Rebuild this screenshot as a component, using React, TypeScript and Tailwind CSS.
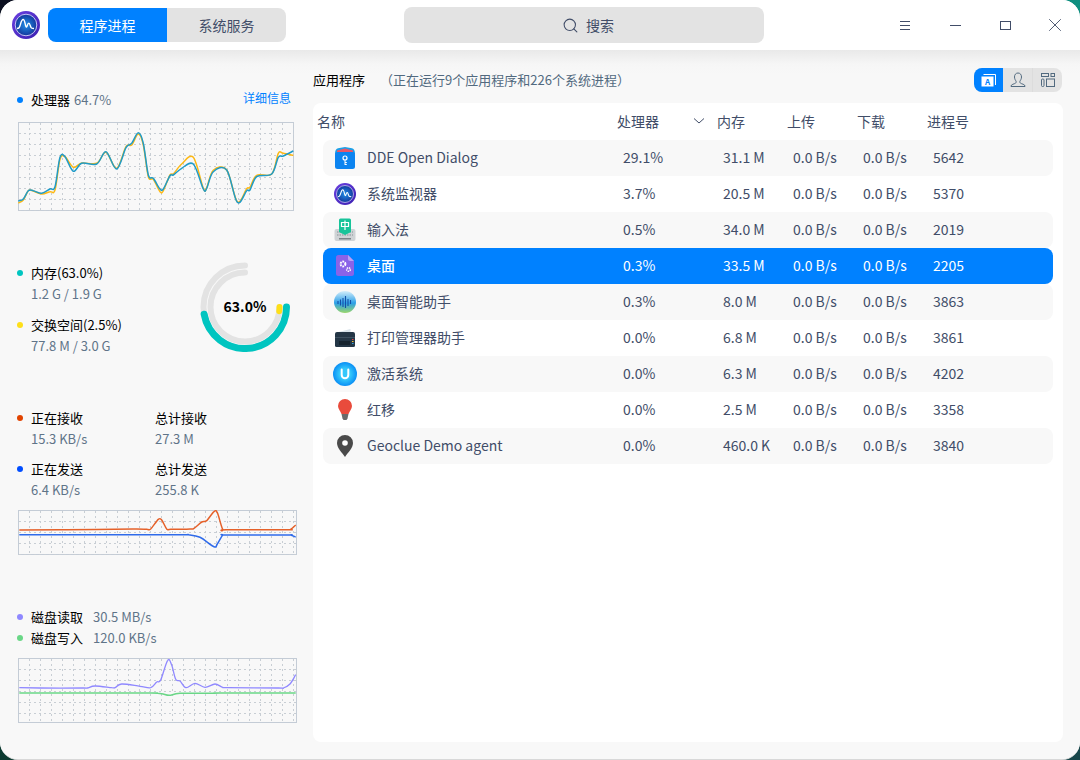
import { ReactNode } from "react";
import { Search, X } from "lucide-react";

type Pt = [number, number];

// points are read off the 3x crops, so they get scaled back down here
function smooth(raw: Pt[], ox: number, oy: number) {
  const p = raw.map(([x, y]) => [x / 3 - ox, y / 3 - oy]);
  let d = `M${p[0][0].toFixed(1)} ${p[0][1].toFixed(1)}`;
  for (let i = 0; i < p.length - 1; i++) {
    const a = p[Math.max(i - 1, 0)];
    const b = p[i];
    const c = p[i + 1];
    const e = p[Math.min(i + 2, p.length - 1)];
    const c1x = b[0] + (c[0] - a[0]) / 6;
    const c1y = b[1] + (c[1] - a[1]) / 6;
    const c2x = c[0] - (e[0] - b[0]) / 6;
    const c2y = c[1] - (e[1] - b[1]) / 6;
    d += ` C${c1x.toFixed(1)} ${c1y.toFixed(1)} ${c2x.toFixed(1)} ${c2y.toFixed(1)} ${c[0].toFixed(1)} ${c[1].toFixed(1)}`;
  }
  return d;
}

const CPU_BLUE: Pt[] = [[55,603],[70,597],[85,572],[100,572],[125,580],[150,567],[165,560],[180,472],[195,470],[220,514],[245,490],[290,492],[318,455],[350,507],[378,443],[395,430],[415,398],[430,430],[445,525],[460,535],[480,567],[490,567],[510,527],[520,525],[545,505],[580,492],[610,567],[620,565],[640,515],[680,510],[712,607],[740,572],[750,570],[770,530],[815,522],[835,472],[850,468],[880,453]];
const CPU_YELLOW: Pt[] = [[55,609],[70,600],[85,572],[100,573],[125,582],[150,575],[165,570],[180,478],[195,470],[220,502],[245,489],[290,490],[318,457],[350,505],[378,440],[395,435],[415,402],[430,435],[445,530],[460,538],[480,575],[490,572],[510,525],[520,522],[545,492],[580,472],[610,565],[620,563],[640,511],[680,510],[712,605],[740,566],[750,562],[770,526],[815,522],[835,460],[850,460],[880,466]];
const NET_UP: Pt[] = [[58,390],[200,389],[400,387],[440,388],[452,387],[475,358],[485,360],[500,387],[512,388],[570,387],[582,385],[605,366],[620,362],[642,335],[652,338],[668,388],[680,389],[860,389],[872,388],[887,375]];
const NET_DOWN: Pt[] = [[58,404],[400,404],[550,404],[565,404],[600,412],[642,440],[652,432],[668,406],[680,405],[860,405],[872,405],[887,411]];
const DISK_READ: Pt[] = [[58,263],[120,264],[250,264],[262,264],[285,258],[335,263],[345,263],[365,252],[420,259],[452,263],[470,246],[482,240],[503,181],[515,195],[527,238],[540,243],[558,263],[585,250],[615,262],[645,252],[668,262],[685,263],[835,264],[850,264],[870,252],[887,224]];
const DISK_WRITE: Pt[] = [[58,279],[440,279],[455,279],[485,281],[508,286],[540,280],[640,280],[660,279],[887,279]];

function Grid({ w, h, children }: { w: number; h: number; children: ReactNode }) {
  const vs: number[] = [];
  for (let x = 11; x < w; x += 11) vs.push(x);
  const hs: number[] = [];
  for (let y = 11; y < h; y += 11) hs.push(y);
  return (
    <svg width={w} height={h} className="block">
      <rect x="0.5" y="0.5" width={w - 1} height={h - 1} fill="#f8f8f8" stroke="#c4ccd6" />
      {vs.map((x) => (
        <line key={x} x1={x + 0.5} x2={x + 0.5} y1="1" y2={h - 1} stroke="#c8ced4" strokeDasharray="2 3" />
      ))}
      {hs.map((y) => (
        <line key={y} y1={y + 0.5} y2={y + 0.5} x1="1" x2={w - 1} stroke="#c8ced4" strokeDasharray="2 3" />
      ))}
      {children}
    </svg>
  );
}

function Dot({ color }: { color: string }) {
  return <span className={`w-[6px] h-[6px] rounded-full shrink-0 ${color}`} />;
}

function Arc({ r, deg, color, w }: { r: number; deg: number; color: string; w: number }) {
  const rad = (deg * Math.PI) / 180;
  const x = 50 + r * Math.cos(rad);
  const y = 50 + r * Math.sin(rad);
  return (
    <path
      d={`M${50 + r} 50 A${r} ${r} 0 ${deg > 180 ? 1 : 0} 1 ${x.toFixed(2)} ${y.toFixed(2)}`}
      fill="none"
      stroke={color}
      strokeWidth={w}
      strokeLinecap="round"
    />
  );
}

function MonitorIcon({ size }: { size: number }) {
  return (
    <svg width={size} height={size} viewBox="0 0 28 28">
      <defs>
        <linearGradient id="monRing" x1="0" y1="0" x2="1" y2="1">
          <stop offset="0" stopColor="#6a3fe0" />
          <stop offset="1" stopColor="#3a1fb0" />
        </linearGradient>
        <radialGradient id="monFace">
          <stop offset="0" stopColor="#1f8fe8" />
          <stop offset="1" stopColor="#14389c" />
        </radialGradient>
      </defs>
      <circle cx="14" cy="14" r="14" fill="url(#monRing)" />
      <circle cx="14" cy="14" r="10.8" fill="url(#monFace)" stroke="#c9c6f5" strokeWidth="1" />
      <path d="M5 17.5c2 0 2.4-.6 3.4-4 .8-3 1.6-5 2.8-5s1.700 3 2.400 6c.5 1.800 1 2 1.500.6.500-1.500.8-3 1.700-3s1.500 3 2.200 4.400c.4.800 1.500 1 3 1" fill="none" stroke="#fff" strokeWidth="1.400" />
    </svg>
  );
}

function DialogIcon() {
  return (
    <svg width="22" height="22" viewBox="0 0 22 22">
      <path d="M1 7c0-4 1.500-5.500 3-5.800L11 0l7 1.200c1.500.3 3 1.800 3 5.800z" fill="#1aa0e8" />
      <path d="M3 3.500 11 1.500l8 2v3H3z" fill="#e8566a" />
      <rect x="1" y="5" width="20" height="17" rx="2.500" fill="#0c84f0" />
      <circle cx="11" cy="11" r="2" fill="none" stroke="#fff" strokeWidth="1.200" />
      <path d="M11 13v5M11 15.500h1.800M11 17.500h1.800" stroke="#fff" strokeWidth="1" fill="none" />
    </svg>
  );
}

function ImeIcon() {
  return (
    <svg width="22" height="24" viewBox="0 0 22 24">
      <rect x="0.500" y="11" width="21" height="12" rx="2" fill="#cfd3d6" />
      <path d="M3 14h16M3 17h16" stroke="#8a9196" strokeWidth="1.200" strokeDasharray="1.500 1" />
      <rect x="5" y="20" width="12" height="1.500" fill="#7c8388" />
      <path d="M5 2a1.500 1.500 0 0 1 1.500-1.500h9A1.500 1.500 0 0 1 17 2v12l-6 3-6-3z" fill="#18c49a" />
      <path d="M7.500 4.500h7v4h-7zM11 2.500v9.500" fill="none" stroke="#fff" strokeWidth="1.200" />
    </svg>
  );
}

function DesktopIcon() {
  return (
    <svg width="18" height="21" viewBox="0 0 18 21">
      <path d="M2.500 0H12l6 6v12.500a2.500 2.500 0 0 1-2.500 2.500h-13A2.500 2.500 0 0 1 0 18.500v-16A2.500 2.500 0 0 1 2.500 0z" fill="#8a63e8" />
      <path d="M12 0l6 6h-4a2 2 0 0 1-2-2z" fill="#b9a0f5" />
      <circle cx="7" cy="9" r="2.400" fill="none" stroke="#fff" strokeWidth="2" strokeDasharray="1.600 .8" />
      <circle cx="12.500" cy="14.500" r="1.800" fill="none" stroke="#fff" strokeWidth="1.600" strokeDasharray="1.300 .7" />
    </svg>
  );
}

function AssistantIcon() {
  return (
    <svg width="22" height="22" viewBox="0 0 22 22">
      <defs>
        <linearGradient id="asst" x1="0" y1="0" x2="0" y2="1">
          <stop offset="0" stopColor="#d4eefb" />
          <stop offset="0.550" stopColor="#2b9fe8" />
          <stop offset="1" stopColor="#9ad66a" />
        </linearGradient>
      </defs>
      <circle cx="11" cy="11" r="11" fill="url(#asst)" />
      <path d="M4 10v3M6.500 8.500v6M9 7v9M11.500 5v12M14 8v7M16.500 9v4" stroke="#1450a8" strokeWidth="1.100" />
    </svg>
  );
}

function PrinterIcon() {
  return (
    <svg width="20" height="18" viewBox="0 0 20 18">
      <path d="M3.500 3 15.500 0v4h-12z" fill="#d8e2ea" />
      <path d="M2 3h16a2 2 0 0 1 2 2v11.500a1.500 1.500 0 0 1-1.500 1.500h-17A1.500 1.500 0 0 1 0 16.500V5a2 2 0 0 1 2-2z" fill="#243646" />
      <rect x="0" y="8" width="20" height="1" fill="#3d5060" />
      <rect x="4" y="12" width="11" height="4" fill="#16242f" />
      <rect x="17" y="10" width="1.500" height="1" fill="#e04040" />
      <rect x="17" y="12" width="1.500" height="1" fill="#f0c030" />
      <rect x="17" y="14" width="1.500" height="1" fill="#30a0e0" />
    </svg>
  );
}

function ActivateIcon() {
  return (
    <svg width="24" height="24" viewBox="0 0 24 24">
      <defs>
        <radialGradient id="actv">
          <stop offset="0.450" stopColor="#35c8fb" />
          <stop offset="1" stopColor="#0a8ff5" />
        </radialGradient>
      </defs>
      <circle cx="12" cy="12" r="12" fill="url(#actv)" />
      <path d="M8.700 7.500V13a3.300 3.300 0 0 0 6.600 0V7.500" fill="none" stroke="#fff" strokeWidth="2" strokeLinecap="round" />
    </svg>
  );
}

function RedshiftIcon() {
  return (
    <svg width="14" height="21" viewBox="0 0 14 21">
      <path d="M7 0a7 7 0 0 1 7 7c0 3-2.500 5-3.500 8h-7C2.500 12 0 10 0 7a7 7 0 0 1 7-7z" fill="#e94b3c" />
      <path d="M3.500 15h7l-1 4.500-1 1.500h-3l-1-1.500z" fill="#6a6a6a" />
    </svg>
  );
}

function PinIcon() {
  return (
    <svg width="16" height="22" viewBox="0 0 16 22">
      <path d="M8 0a8 8 0 0 1 8 8c0 5-5 9.500-8 14-3-4.500-8-9-8-14a8 8 0 0 1 8-8z" fill="#4a4a4a" />
      <circle cx="8" cy="8" r="2.800" fill="#fff" />
    </svg>
  );
}

const ROWS = [
  { icon: <DialogIcon />, name: "DDE Open Dialog", cpu: "29.1%", mem: "31.1 M", pid: "5642" },
  { icon: <MonitorIcon size={22} />, name: "系统监视器", cpu: "3.7%", mem: "20.5 M", pid: "5370" },
  { icon: <ImeIcon />, name: "输入法", cpu: "0.5%", mem: "34.0 M", pid: "2019" },
  { icon: <DesktopIcon />, name: "桌面", cpu: "0.3%", mem: "33.5 M", pid: "2205", selected: true },
  { icon: <AssistantIcon />, name: "桌面智能助手", cpu: "0.3%", mem: "8.0 M", pid: "3863" },
  { icon: <PrinterIcon />, name: "打印管理器助手", cpu: "0.0%", mem: "6.8 M", pid: "3861" },
  { icon: <ActivateIcon />, name: "激活系统", cpu: "0.0%", mem: "6.3 M", pid: "4202" },
  { icon: <RedshiftIcon />, name: "红移", cpu: "0.0%", mem: "2.5 M", pid: "3358" },
  { icon: <PinIcon />, name: "Geoclue Demo agent", cpu: "0.0%", mem: "460.0 K", pid: "3840" },
];

export default function App() {
  return (
    <div className="w-[1080px] h-[760px] overflow-hidden bg-[conic-gradient(#0f8f80_0_25%,#17464a_25%_50%,#0b3a30_50%_75%,#0b1020_75%)] font-['Noto_Sans_CJK_SC','Noto_Sans',sans-serif] text-[14px]">
      <div className="w-full h-full rounded-[18px] overflow-hidden bg-[#f8f8f8] flex flex-col border-b border-[#d8d8d8]">
        {/* title bar */}
        <header className="h-[50px] shrink-0 bg-white flex items-center pl-[12px] relative">
          <MonitorIcon size={28} />
          <div className="ml-[8px] flex h-[34px] w-[238px] rounded-[8px] overflow-hidden text-[14px]">
            <div className="w-[119px] bg-[#0081ff] text-white flex items-center justify-center">程序进程</div>
            <div className="w-[119px] bg-[#e3e3e3] text-[#414d68] flex items-center justify-center">系统服务</div>
          </div>
          <div className="ml-[118px] w-[360px] h-[36px] rounded-[8px] bg-[#e3e3e3] flex items-center justify-center gap-[7px] pl-[8px] text-[#526a7f]">
            <Search size={17} strokeWidth={1.500} className="text-[#414d68]" />
            <span className="text-[#414d68]">搜索</span>
          </div>
          <div className="ml-auto flex items-center text-[#414d68]">
            <button className="w-[50px] h-[50px] flex items-center justify-center">
              <span className="flex flex-col gap-[3px] w-[10px]">
                <span className="h-px bg-[#414d68]" />
                <span className="h-px bg-[#414d68]" />
                <span className="h-px bg-[#414d68]" />
              </span>
            </button>
            <button className="w-[50px] h-[50px] flex items-center justify-center">
              <span className="w-[11px] h-px bg-[#414d68]" />
            </button>
            <button className="w-[50px] h-[50px] flex items-center justify-center">
              <span className="w-[11px] h-[9px] border border-[#414d68]" />
            </button>
            <button className="w-[50px] h-[50px] flex items-center justify-center">
              <X size={22} strokeWidth={1} />
            </button>
          </div>
        </header>

        <div className="flex-1 flex min-h-0 bg-[linear-gradient(#e9e9e9,#f6f6f6_14px,#f8f8f8_24px)]">
          {/* left summary column */}
          <aside className="w-[313px] shrink-0 pl-[18px] flex flex-col">
            <section className="pt-[39px]">
              <div className="flex items-center h-[22px] -ml-[1px]">
                <Dot color="bg-[#0081ff]" />
                <span className="ml-[8px] text-[13px] text-black">处理器</span>
                <span className="ml-[4px] text-[13px] text-[#5f7488]">64.7%</span>
                <span className="ml-auto mr-[22px] text-[12px] text-[#0081ff] -mt-[4px]">详细信息</span>
              </div>
              <div className="mt-[11px]">
                <Grid w={276} h={89}>
                  <path d={smooth(CPU_YELLOW, 18, 122)} fill="none" stroke="#fdb813" strokeWidth="1.500" />
                  <path d={smooth(CPU_BLUE, 18, 122)} fill="none" stroke="#1f9bc8" strokeWidth="1.500" />
                </Grid>
              </div>
            </section>

            <section className="mt-[51px] h-[90px] flex items-center relative">
              <div className="flex flex-col -ml-[1px] pt-[4px]">
                <div className="flex items-center h-[20px] text-[13px] text-black">
                  <Dot color="bg-[#00c5c0]" />
                  <span className="ml-[8px]">内存(63.0%)</span>
                </div>
                <div className="ml-[14px] h-[20px] mt-[1px] text-[13px] leading-[20px] text-[#5f7488]">1.2 G / 1.9 G</div>
                <div className="flex items-center h-[20px] mt-[11px] text-[13px] text-black">
                  <Dot color="bg-[#fedf19]" />
                  <span className="ml-[8px]">交换空间(2.5%)</span>
                </div>
                <div className="ml-[14px] h-[20px] mt-[1px] text-[13px] leading-[20px] text-[#5f7488]">77.8 M / 3.0 G</div>
              </div>
              <div className="ml-auto mr-[23px] w-[90px] h-[90px] relative">
                <svg width="90" height="90" viewBox="5 5 90 90">
                  <Arc r={41.5} deg={270} color="#e3e3e3" w={6} />
                  <Arc r={41.5} deg={170} color="#00c5c0" w={7} />
                  <Arc r={34.500} deg={270} color="#e3e3e3" w={6} />
                  <Arc r={34.500} deg={7} color="#fedf19" w={6} />
                </svg>
                <span className="absolute inset-0 flex items-center justify-center text-[14px] font-semibold text-black -mt-[1px]">63.0%</span>
              </div>
            </section>

            <section className="mt-[56px]">
              <div className="grid grid-cols-[138px_1fr] -ml-[1px] text-[13px] text-black">
                <div>
                  <div className="flex items-center h-[20px]"><Dot color="bg-[#e14300]" /><span className="ml-[8px]">正在接收</span></div>
                  <div className="ml-[14px] mt-[1px] h-[20px] text-[13px] leading-[20px] text-[#5f7488]">15.3 KB/s</div>
                </div>
                <div>
                  <div className="h-[20px] leading-[20px]">总计接收</div>
                  <div className="mt-[1px] h-[20px] text-[13px] leading-[20px] text-[#5f7488]">27.3 M</div>
                </div>
                <div className="mt-[10px]">
                  <div className="flex items-center h-[20px]"><Dot color="bg-[#004dff]" /><span className="ml-[8px]">正在发送</span></div>
                  <div className="ml-[14px] mt-[1px] h-[20px] text-[13px] leading-[20px] text-[#5f7488]">6.4 KB/s</div>
                </div>
                <div className="mt-[10px]">
                  <div className="h-[20px] leading-[20px]">总计发送</div>
                  <div className="mt-[1px] h-[20px] text-[13px] leading-[20px] text-[#5f7488]">255.8 K</div>
                </div>
              </div>
              <div className="mt-[10px]">
                <Grid w={279} h={45}>
                  <path d={smooth(NET_UP, 18, 110)} fill="none" stroke="#e5612a" strokeWidth="1.500" />
                  <path d={smooth(NET_DOWN, 18, 110)} fill="none" stroke="#2f6bea" strokeWidth="1.500" />
                </Grid>
              </div>
            </section>

            <section className="mt-[51px]">
              <div className="flex items-center h-[21px] -ml-[1px] text-[13px]">
                <Dot color="bg-[#8f88ff]" />
                <span className="ml-[8px] text-black w-[62px]">磁盘读取</span>
                <span className="text-[13px] text-[#5f7488]">30.5 MB/s</span>
              </div>
              <div className="flex items-center h-[21px] -ml-[1px] text-[13px]">
                <Dot color="bg-[#6ad787]" />
                <span className="ml-[8px] text-black w-[62px]">磁盘写入</span>
                <span className="text-[13px] text-[#5f7488]">120.0 KB/s</span>
              </div>
              <div className="mt-[10px]">
                <Grid w={279} h={65}>
                  <path d={smooth(DISK_READ, 18, 58)} fill="none" stroke="#8f88ff" strokeWidth="1.300" />
                  <path d={smooth(DISK_WRITE, 18, 58)} fill="none" stroke="#6ad787" strokeWidth="1.600" />
                </Grid>
              </div>
            </section>
          </aside>

          {/* process table */}
          <main className="flex-1 min-w-0 pr-[17px] flex flex-col pb-[17px]">
            <div className="h-[53px] shrink-0 flex items-center justify-between pt-[6px]">
              <div className="text-[13px] text-black">
                应用程序
                <span className="ml-[15px] text-[#526a7f]">（正在运行9个应用程序和226个系统进程）</span>
              </div>
              <div className="flex w-[88px] h-[24px] mr-[1px] rounded-[8px] overflow-hidden bg-[#e3e3e3]">
                <div className="w-[29px] bg-[#0081ff] flex items-center justify-center">
                  <svg width="16" height="14" viewBox="0 0 16 14">
                    <path d="M2.500 1.500H14.500V12" fill="none" stroke="#fff" />
                    <rect x="0.500" y="3.500" width="12" height="10" fill="#fff" />
                    <text x="6.500" y="11.500" textAnchor="middle" fontSize="8" fontWeight="700" fill="#0081ff">A</text>
                  </svg>
                </div>
                <div className="w-[30px] flex items-center justify-center border-r border-[#dcdcdc]">
                  <svg width="16" height="16" viewBox="0 0 16 16" fill="none" stroke="#526a7f">
                    <path d="M8 1c-2.200 0-3.500 1.700-3.500 4 0 1.800.9 3.200 1.500 4 .3.500.2 1.700-.5 2.200-1 .7-4.500 1.200-4.500 2.800v.500h14V14c0-1.600-3.500-2.100-4.500-2.800-.7-.5-.8-1.700-.5-2.200.6-.8 1.500-2.200 1.500-4 0-2.300-1.300-4-3.500-4z" />
                  </svg>
                </div>
                <div className="w-[29px] flex items-center justify-center">
                  <svg width="16" height="16" viewBox="0 0 16 16" fill="none" stroke="#526a7f">
                    <rect x="1.500" y="1.500" width="7" height="3" />
                    <rect x="11" y="1.500" width="3.500" height="3" />
                    <rect x="1.500" y="7" width="2.500" height="7.500" rx="1" />
                    <rect x="6.500" y="7" width="8" height="7.500" />
                  </svg>
                </div>
              </div>
            </div>

            <div className="flex-1 rounded-[8px] bg-white">
              <div className="grid grid-cols-[300px_76px_24px_70px_70px_70px_1fr] h-[37px] items-center pl-[4px] text-[#414d68]">
                <span>名称</span>
                <span>处理器</span>
                <svg width="12" height="8" viewBox="0 0 12 8" className="-mt-[2px]">
                  <path d="M1 1.500 6 6l5-4.500" fill="none" stroke="#414d68" />
                </svg>
                <span>内存</span>
                <span>上传</span>
                <span>下载</span>
                <span>进程号</span>
              </div>
              <div className="px-[10px]">
                {ROWS.map((r, i) => (
                  <div
                    key={r.pid}
                    className={
                      r.selected
                        ? "grid grid-cols-[300px_100px_70px_70px_70px_1fr] h-[36px] items-center rounded-[8px] bg-[#0081ff] text-white"
                        : i % 2 === 0
                          ? "grid grid-cols-[300px_100px_70px_70px_70px_1fr] h-[36px] items-center rounded-[8px] bg-[#f8f8f8] text-[#414d68]"
                          : "grid grid-cols-[300px_100px_70px_70px_70px_1fr] h-[36px] items-center rounded-[8px] text-[#414d68]"
                    }
                  >
                    <div className={r.selected ? "flex items-center font-medium -mt-[1px]" : "flex items-center -mt-[1px]"}>
                      <span className="w-[44px] flex justify-center">{r.icon}</span>
                      <span>{r.name}</span>
                    </div>
                    <span className="-mt-[1px]">{r.cpu}</span>
                    <span className="-mt-[1px]">{r.mem}</span>
                    <span className="-mt-[1px]">0.0 B/s</span>
                    <span className="-mt-[1px]">0.0 B/s</span>
                    <span className="-mt-[1px]">{r.pid}</span>
                  </div>
                ))}
              </div>
            </div>
          </main>
        </div>
      </div>
    </div>
  );
}
